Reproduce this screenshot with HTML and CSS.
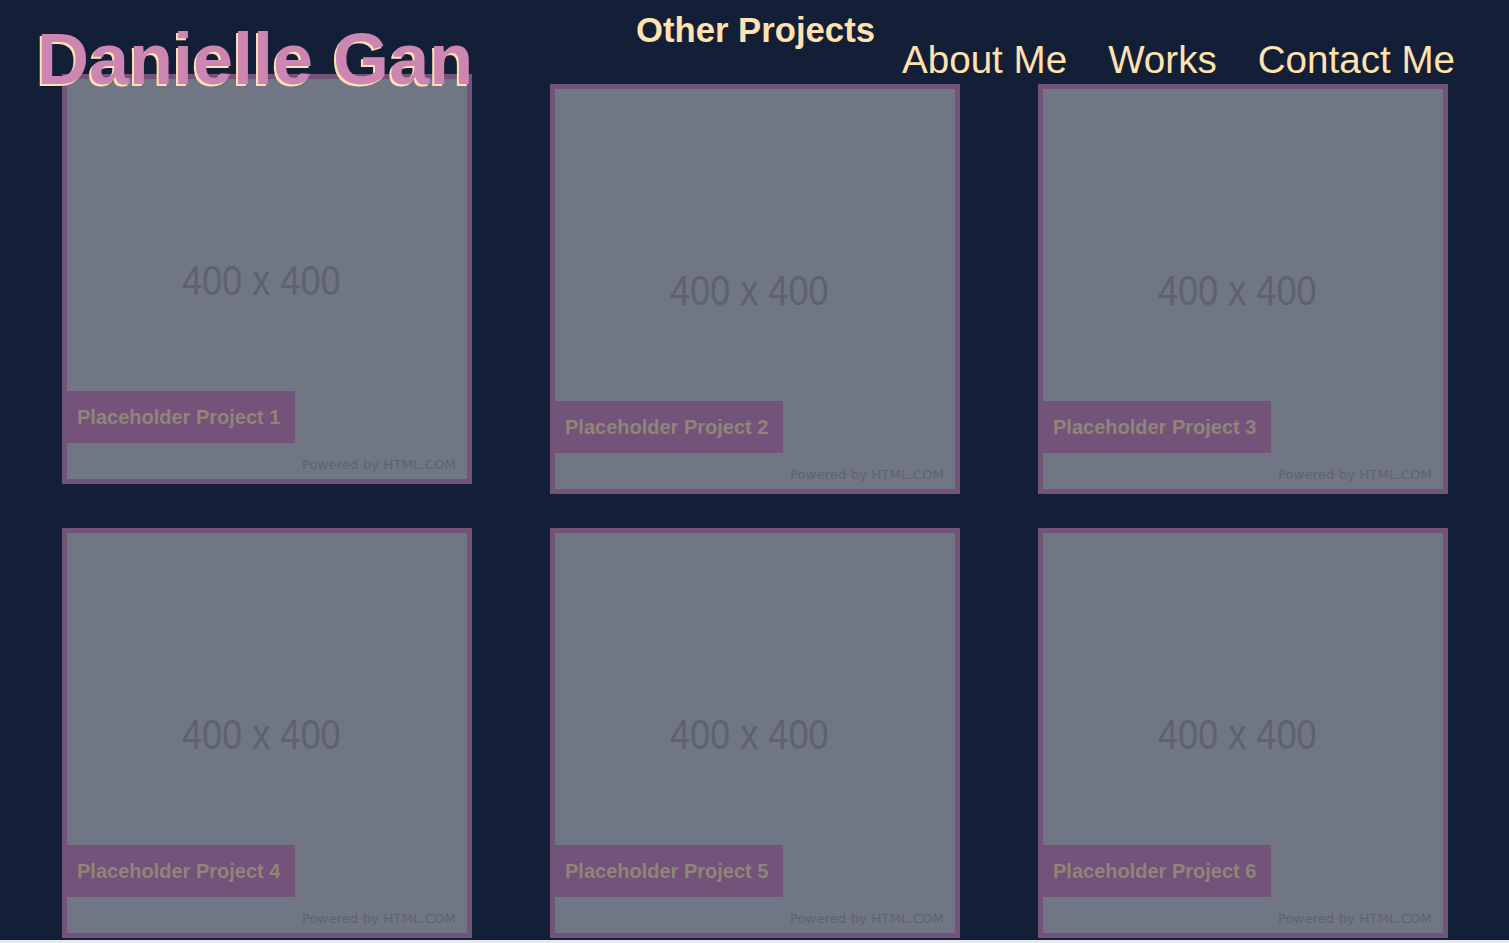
FILE: index.html
```html
<!DOCTYPE html>
<html lang="en">
<head>
<meta charset="utf-8">
<title>Danielle Gan - Other Projects</title>
<link rel="stylesheet" href="styles.css">
</head>
<body>
<header class="site-header">
  <h1 class="site-title">Danielle Gan</h1>
  <nav class="site-nav">
    <a class="nav-link nav-link--current" href="#">Other Projects</a>
    <a class="nav-link" href="#">About Me</a>
    <a class="nav-link" href="#">Works</a>
    <a class="nav-link" href="#">Contact Me</a>
  </nav>
</header>
<main class="project-grid">
  <article class="project-card project-card--raised">
    <div class="placeholder">400 x 400</div>
    <div class="project-label">Placeholder Project 1</div>
    <div class="powered">Powered by HTML.COM</div>
  </article>
  <article class="project-card">
    <div class="placeholder">400 x 400</div>
    <div class="project-label">Placeholder Project 2</div>
    <div class="powered">Powered by HTML.COM</div>
  </article>
  <article class="project-card">
    <div class="placeholder">400 x 400</div>
    <div class="project-label">Placeholder Project 3</div>
    <div class="powered">Powered by HTML.COM</div>
  </article>
  <article class="project-card">
    <div class="placeholder">400 x 400</div>
    <div class="project-label">Placeholder Project 4</div>
    <div class="powered">Powered by HTML.COM</div>
  </article>
  <article class="project-card">
    <div class="placeholder">400 x 400</div>
    <div class="project-label">Placeholder Project 5</div>
    <div class="powered">Powered by HTML.COM</div>
  </article>
  <article class="project-card">
    <div class="placeholder">400 x 400</div>
    <div class="project-label">Placeholder Project 6</div>
    <div class="powered">Powered by HTML.COM</div>
  </article>
</main>
</body>
</html>
```
FILE: styles.css
```css
html {
  background: #e6e9ee;
}
body {
  margin: 0;
  height: 940px;
  overflow: hidden;
  background: #131e37;
  font-family: "Liberation Sans", Arial, sans-serif;
}
.site-header {
  height: 84px;
  display: flex;
  justify-content: space-between;
  align-items: flex-start;
  padding: 0 54px 0 37px;
}
.site-title {
  position: relative;
  z-index: 2;
  margin: 23px 0 0 0;
  font-size: 72px;
  line-height: 72px;
  font-weight: 700;
  color: #cc86b1;
  text-shadow: -2px 2px 0 #fde2b2;
  white-space: nowrap;
}
.site-nav {
  display: flex;
  align-items: flex-start;
  gap: 41px;
}
.nav-link {
  color: #ffe2b0;
  text-decoration: none;
  font-size: 38.6px;
  line-height: 39px;
  margin-top: 40px;
  white-space: nowrap;
}
.nav-link--current {
  font-weight: 700;
  font-size: 34.7px;
  line-height: 35px;
  margin-top: 13px;
  margin-right: -14px;
}
.project-grid {
  display: grid;
  grid-template-columns: repeat(3, 410px);
  column-gap: 78px;
  row-gap: 34px;
  padding-left: 62px;
}
.project-card {
  position: relative;
  box-sizing: border-box;
  width: 410px;
  height: 410px;
  border: 5px solid #735479;
  background: #707683;
  display: flex;
  align-items: center;
  justify-content: center;
}
.project-card--raised {
  transform: translateY(-10px);
}
.placeholder {
  font-size: 42px;
  color: #5d626d;
  margin-right: 12px;
  padding-top: 4px;
  white-space: nowrap;
  transform: scaleX(0.86);
}
.project-label {
  position: absolute;
  left: 0;
  top: 312px;
  padding: 14px 15px 14px 10px;
  background: #735379;
  color: #8f8578;
  font-size: 20px;
  line-height: 24px;
  font-weight: 700;
  white-space: nowrap;
}
.powered {
  position: absolute;
  right: 11px;
  bottom: 7px;
  font-family: "DejaVu Sans", sans-serif;
  font-size: 13px;
  line-height: 15px;
  letter-spacing: 0.2px;
  color: #5e636e;
}
```
